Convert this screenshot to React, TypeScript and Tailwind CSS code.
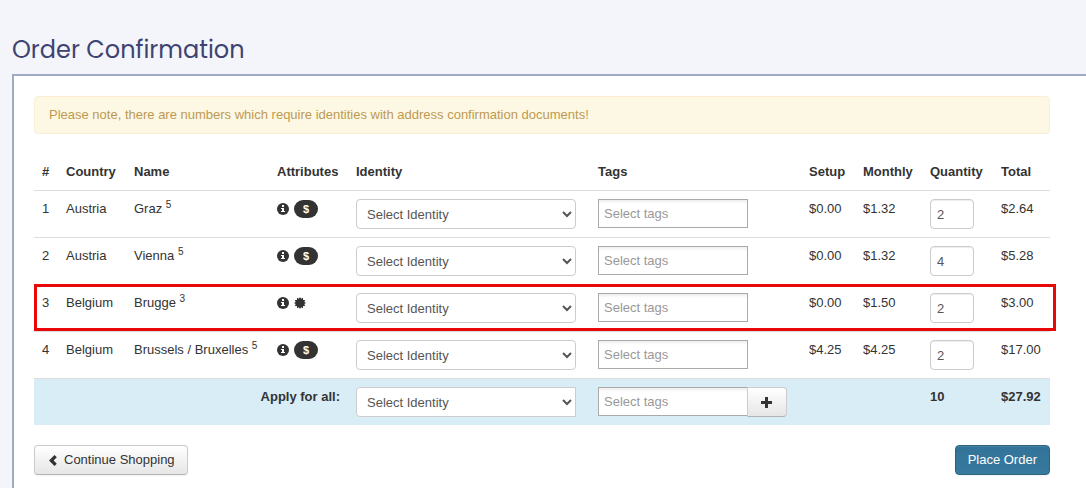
import React from "react";

const fieldClass =
  "h-[30px] rounded border border-[#cccccc] bg-white text-[13px] leading-5 text-[#555555]";

const rows = [
  { id: 1, country: "Austria", name: "Graz", note: 5, paid: true, setup: "$0.00", monthly: "$1.32", quantity: 2, total: "$2.64" },
  { id: 2, country: "Austria", name: "Vienna", note: 5, paid: true, setup: "$0.00", monthly: "$1.32", quantity: 4, total: "$5.28" },
  { id: 3, country: "Belgium", name: "Brugge", note: 3, paid: false, setup: "$0.00", monthly: "$1.50", quantity: 2, total: "$3.00", marked: true },
  { id: 4, country: "Belgium", name: "Brussels / Bruxelles", note: 5, paid: true, setup: "$4.25", monthly: "$4.25", quantity: 2, total: "$17.00" },
];

function InfoIcon() {
  return (
    <svg width="12" height="12" viewBox="0 0 12 12" aria-hidden="true">
      <circle cx="6" cy="6" r="6" fill="#333333" />
      <path d="M5 2h2v2H5zM4 5h3v3h1v1H4V8h1V6H4z" fill="#ffffff" />
    </svg>
  );
}

function CertificateIcon() {
  return (
    <svg width="12" height="12" viewBox="-6 -6 12 12" fill="#333333" aria-hidden="true">
      <path
        d="M0-6 1.100-4.300 3-5.200 3.100-3.100 5.200-3 4.300-1.100 6 0 4.300 1.100 5.200 3 3.100 3.100 3 5.200 1.100 4.300 0 6-1.100 4.300-3 5.200-3.100 3.100-5.200 3-4.300 1.100-6 0-4.300-1.100-5.200-3-3.100-3.100-3-5.200-1.100-4.300z"
      />
    </svg>
  );
}

function IdentitySelect({ label, className }: { label: string; className: string }) {
  return (
    <select aria-label={label} className={`${fieldClass} ${className} block w-[220px] px-[6px] py-1`}>
      <option>Select Identity</option>
    </select>
  );
}

function TagsInput({ label }: { label: string }) {
  return (
    <input
      type="text"
      aria-label={label}
      placeholder="Select tags"
      className="block h-[29px] w-[150px] border border-[#aaaaaa] bg-white bg-linear-to-b from-[#eeeeee] to-white to-15% px-[5px] text-[13px] leading-5 placeholder:text-[#999999]"
    />
  );
}

export default function App() {
  return (
    <div className="flex min-h-screen flex-col bg-[#f4f5fa] pl-3 font-['Liberation_Sans',Arial,sans-serif] text-[13px] leading-5 text-[#333333]">
      <h1 className="pt-8 pb-[6px] font-['Poppins','Lato',sans-serif] text-[24px] leading-9 text-[#3e4371]">
        Order Confirmation
      </h1>

      <main className="flex-1 border-t-2 border-l-2 border-[#9fabc5] bg-white py-5 pr-9 pl-5">
        {/* Notice */}
        <div role="alert" className="mb-5 rounded border border-[#fbeed5] bg-[#fcf8e3] px-[14px] py-2 text-[#c09853]">
          Please note, there are numbers which require identities with address confirmation documents!
        </div>

        {/* Order */}
        <table className="w-full table-fixed border-separate border-spacing-0 text-left [&_td]:border-t [&_td]:border-[#dddddd] [&_td]:px-2 [&_td]:pt-2 [&_td]:pb-2 [&_td]:align-top [&_th]:p-2">
          <colgroup>
            <col className="w-6" />
            <col className="w-[68px]" />
            <col className="w-[143px]" />
            <col className="w-[79px]" />
            <col className="w-[242px]" />
            <col />
            <col className="w-[54px]" />
            <col className="w-[67px]" />
            <col className="w-[71px]" />
            <col className="w-[57px]" />
          </colgroup>
          <thead>
            <tr>
              <th>#</th>
              <th>Country</th>
              <th>Name</th>
              <th>Attributes</th>
              <th>Identity</th>
              <th>Tags</th>
              <th>Setup</th>
              <th>Monthly</th>
              <th>Quantity</th>
              <th>Total</th>
            </tr>
          </thead>
          <tbody>
            {rows.map((row) => (
              <tr key={row.id} className="relative">
                <td>{row.id}</td>
                <td>{row.country}</td>
                <td className="whitespace-nowrap">
                  {row.name} <sup className="text-[10px]">{row.note}</sup>
                </td>
                <td>
                  <div className="flex h-5 items-center gap-[5px]">
                    <InfoIcon />
                    {row.paid ? (
                      <span className="flex h-[18px] w-6 items-center justify-center rounded-full bg-[#333333] text-[11px] leading-none font-bold text-white">
                        $
                      </span>
                    ) : (
                      <CertificateIcon />
                    )}
                  </div>
                </td>
                <td><IdentitySelect label={`Identity for ${row.name}`} className="" /></td>
                <td><TagsInput label={`Tags for ${row.name}`} /></td>
                <td>{row.setup}</td>
                <td>{row.monthly}</td>
                <td>
                  <input
                    type="text"
                    aria-label={`Quantity for ${row.name}`}
                    defaultValue={row.quantity}
                    className={`${fieldClass} block w-11 px-[6px] shadow-[inset_0_1px_1px_rgba(0,0,0,0.075)]`}
                  />
                </td>
                <td>
                  {row.total}
                  {row.marked && (
                    <span className="pointer-events-none absolute inset-y-0 -right-[6px] left-0 border-3 border-[#ea0707]" />
                  )}
                </td>
              </tr>
            ))}
          </tbody>
          <tfoot>
            <tr className="bg-[#d9edf7] font-bold">
              <td colSpan={4} className="text-right">Apply for all:</td>
              <td><IdentitySelect label="Identity for all" className="rounded-r-none font-normal" /></td>
              <td className="font-normal">
                <div className="flex">
                  <TagsInput label="Tags for all" />
                  <button
                    type="button"
                    aria-label="Add tags to all"
                    className="-ml-px flex h-[30px] w-10 items-center justify-center rounded-r border border-[#cccccc] border-b-[#b3b3b3] bg-linear-to-b from-white to-[#e6e6e6]"
                  >
                    <svg width="12" height="12" viewBox="0 0 12 12" fill="#333333" aria-hidden="true">
                      <path d="M4 1h3v4h4v3H7v4H4V8H0V5h4z" />
                    </svg>
                  </button>
                </div>
              </td>
              <td />
              <td />
              <td>10</td>
              <td>$27.92</td>
            </tr>
          </tfoot>
        </table>

        {/* Actions */}
        <div className="mt-5 flex justify-between">
          <button
            type="button"
            className="flex items-center gap-[5px] rounded border border-[#cccccc] border-b-[#b3b3b3] bg-linear-to-b from-white to-[#e6e6e6] px-3 py-1 shadow-[0_1px_2px_rgba(0,0,0,0.05)]"
          >
            <svg width="12" height="12" viewBox="0 0 12 12" fill="#333333" aria-hidden="true">
              <path d="M7.500 1 9.800 3.200 6.600 6.500 9.800 9.800 7.500 12 2 6.500z" />
            </svg>
            Continue Shopping
          </button>
          <button
            type="button"
            className="rounded border border-[#2a6480] bg-linear-to-b from-[#337399] to-[#377a9e] px-3 py-1 text-white shadow-[inset_0_1px_0_rgba(255,255,255,0.1),0_1px_2px_rgba(0,0,0,0.05)]"
          >
            Place Order
          </button>
        </div>
      </main>
    </div>
  );
}
